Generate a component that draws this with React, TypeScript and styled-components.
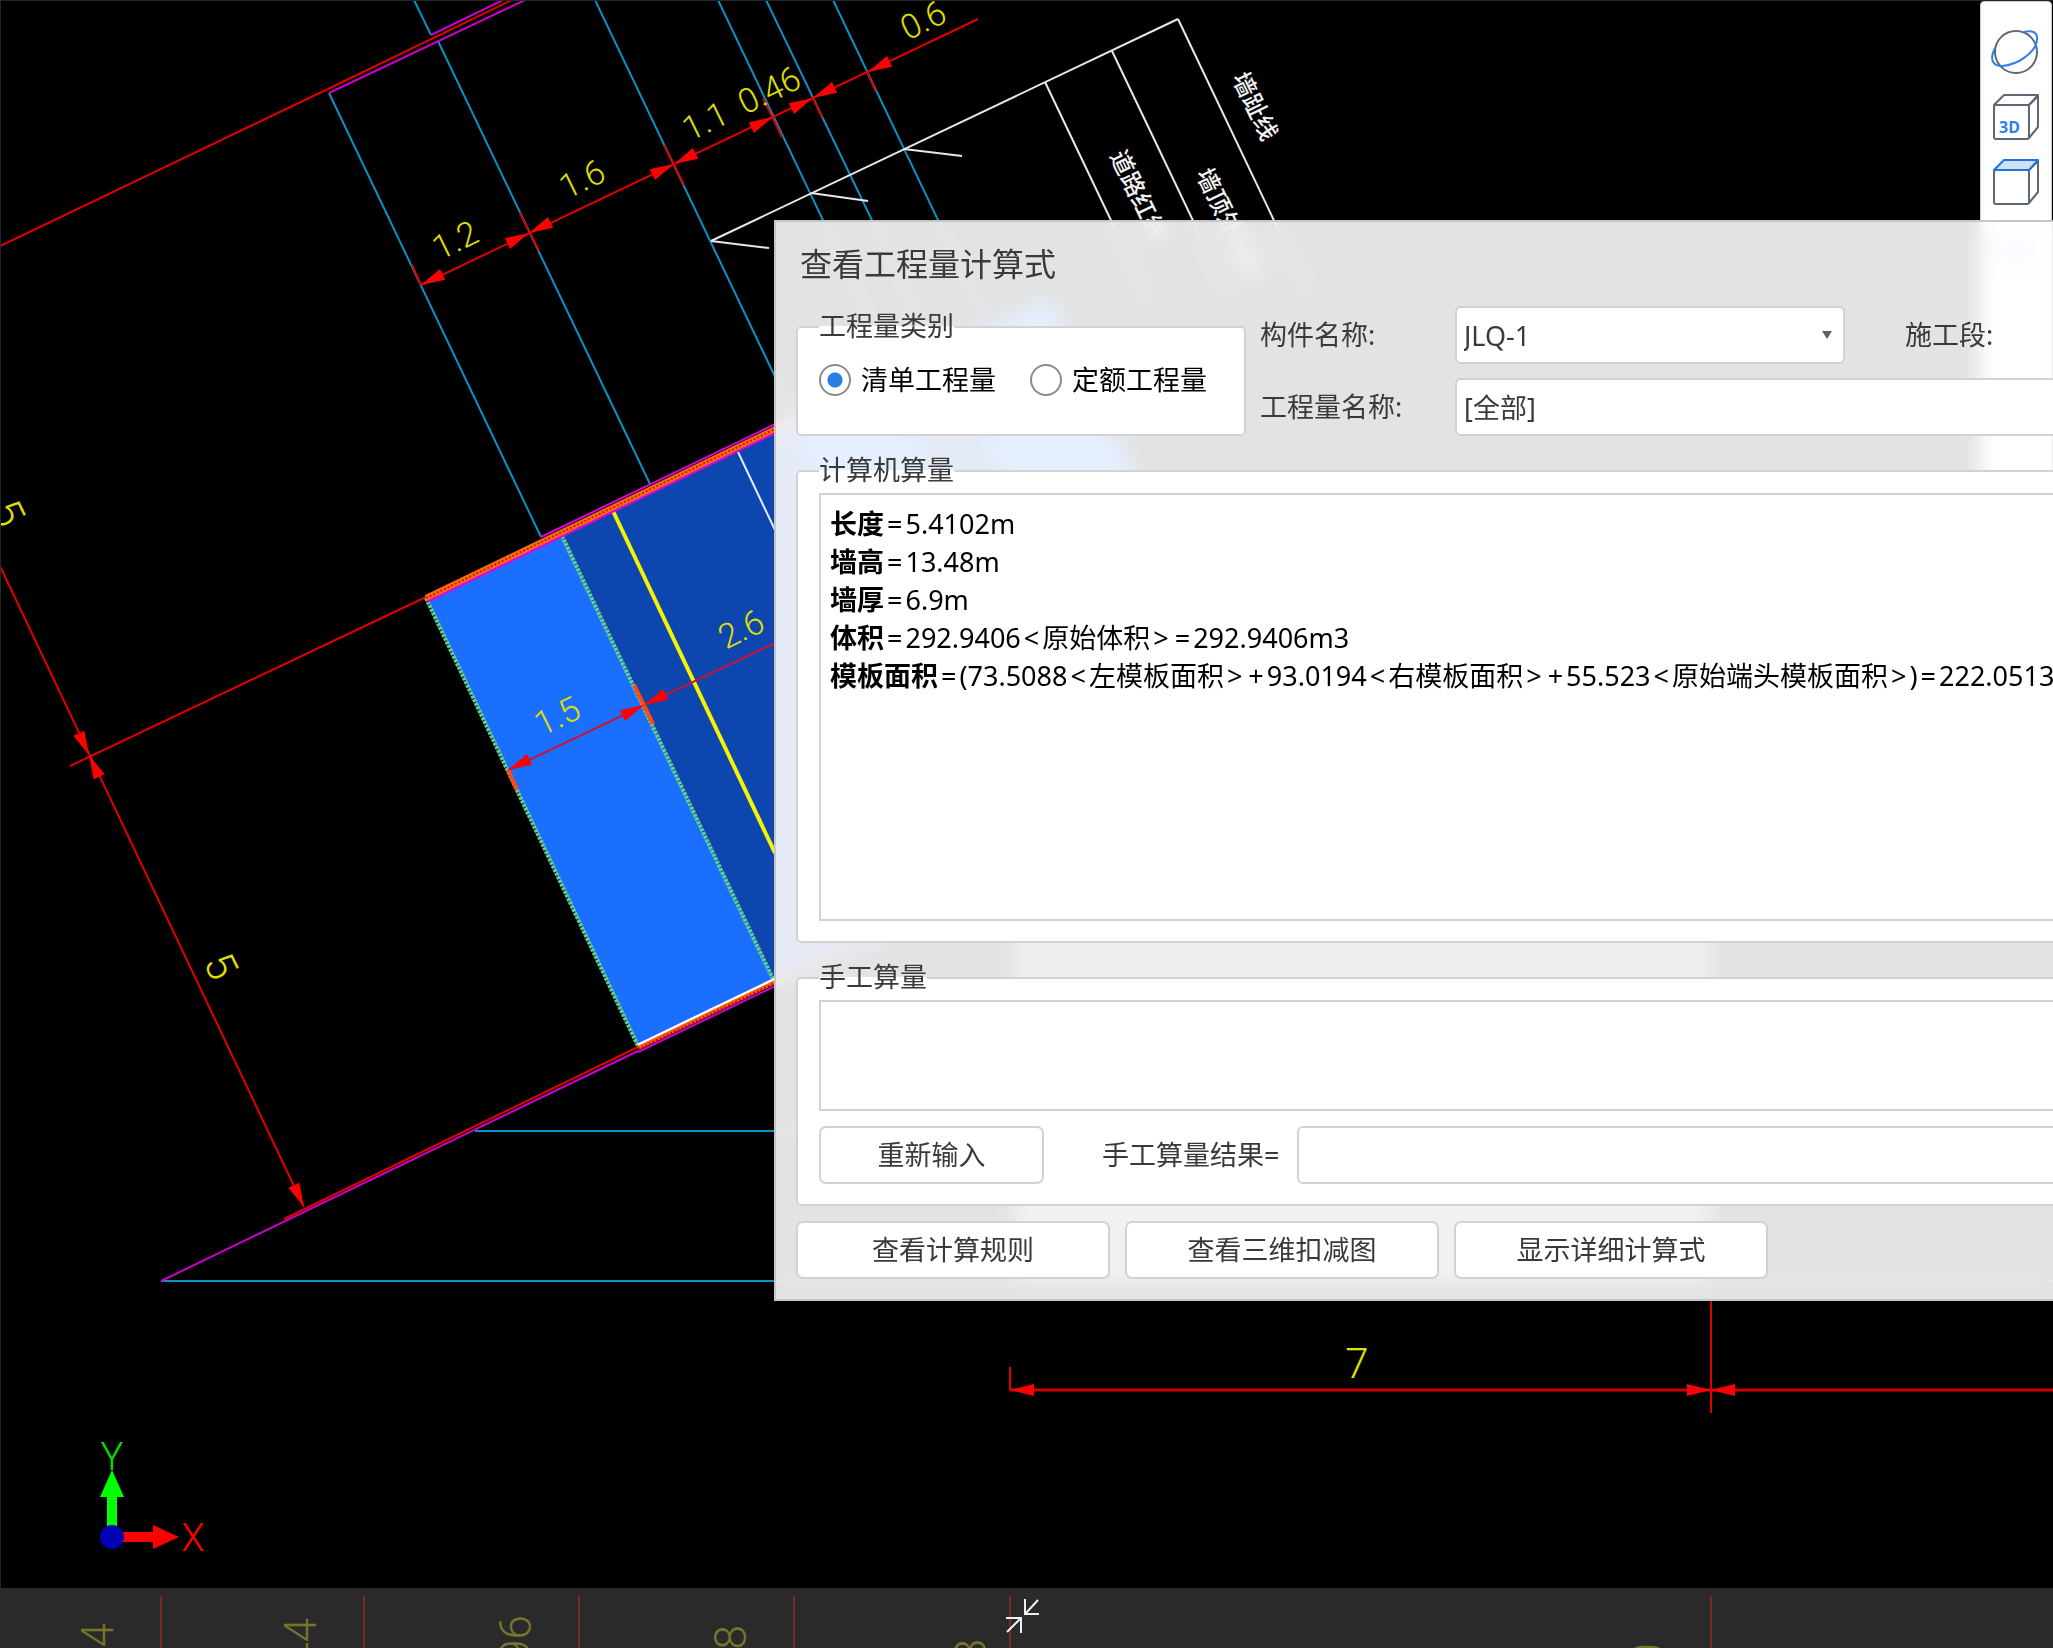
import React, { useState } from "react";
import styled, { createGlobalStyle } from "styled-components";

const GlobalStyle = createGlobalStyle`
  * { box-sizing: border-box; }
  body { margin: 0; background: #000; }
  body, button, input, select, textarea {
    font-family: "Noto Sans", "Noto Sans CJK SC", sans-serif;
  }
`;

const Workspace = styled.div`
  position: relative;
  display: flex;
  flex-direction: column;
  min-height: 100vh;
  overflow: hidden;
  background: #000;
`;

const Viewport = styled.main`
  position: relative;
  flex: 1;
  overflow: hidden;
  border-top: 1px solid #262626;
  border-left: 1px solid #262626;
`;

const Drawing = styled.svg`
  position: absolute;
  top: -1px;
  left: -1px;
  overflow: visible;
`;

const DimText = styled.text<{ $size?: number; $color?: string }>`
  font-family: Roboto, sans-serif;
  font-weight: 300;
  font-size: ${(p) => p.$size ?? 34}px;
  fill: ${(p) => p.$color ?? "#e0e000"};
  text-anchor: middle;
  dominant-baseline: central;
`;

const NoteText = styled.text`
  font-family: "Noto Sans CJK SC", sans-serif;
  font-size: 24px;
  font-weight: 500;
  fill: #f2f2f2;
  dominant-baseline: central;
`;

const Toolbar = styled.aside`
  position: absolute;
  top: 0;
  right: 1px;
  width: 72px;
  height: 700px;
  padding: 24px 0;
  display: flex;
  flex-direction: column;
  align-items: center;
  gap: 13px;
  background: #fff;
  border: 1px solid #c8c8c8;
  border-radius: 4px;
`;

const ToolButton = styled.button`
  width: 52px;
  height: 52px;
  padding: 0;
  border: 0;
  background: transparent;
  display: grid;
  place-items: center;
`;

const StatusStrip = styled.footer`
  position: relative;
  height: 60px;
  background: #2a2a2a;
  overflow: hidden;
`;

const CollapseButton = styled.button`
  position: absolute;
  left: 1000px;
  top: 6px;
  width: 44px;
  height: 44px;
  padding: 0;
  border: 0;
  background: transparent;
`;

const Dialog = styled.section`
  position: absolute;
  top: 220px;
  left: 774px;
  width: 1400px;
  padding: 20px;
  border: 2px solid #c6c6c6;
  background: rgba(255, 255, 255, 0.89);
  backdrop-filter: blur(10px);
  color: #3a3a3a;
  font-size: 27px;
  line-height: 36px;
`;

const Title = styled.h1`
  margin: 0 0 20px 4px;
  font-size: 32px;
  font-weight: 400;
  line-height: 44px;
`;

const TopRow = styled.div`
  display: flex;
  align-items: flex-end;
  gap: 14px;
  margin-bottom: 20px;
`;

const Group = styled.fieldset<{ $gap?: number }>`
  margin: 0 0 ${(p) => p.$gap ?? 20}px;
  min-width: 0;
  padding: 7px 21px 20px;
  border: 2px solid #d2d2d2;
  border-radius: 5px;
  background: #fff;
`;

const CategoryGroup = styled(Group)`
  flex: none;
  width: 450px;
  margin: 0;
  padding: 22px 21px 38px;
`;

const Legend = styled.legend`
  padding: 0 0 2px;
  line-height: 28px;
`;

const RadioRow = styled.div`
  display: flex;
  gap: 34px;
`;

const RadioLabel = styled.label`
  display: flex;
  align-items: center;
  gap: 10px;
  height: 32px;
  color: #000;
`;

const Radio = styled.input`
  appearance: none;
  flex: none;
  width: 32px;
  height: 32px;
  margin: 0;
  border: 2px solid #8c8c8c;
  border-radius: 50%;
  background: #fff;
  &:checked {
    background: radial-gradient(circle, #2a7de1 7px, #fff 8px);
  }
`;

const Filters = styled.div`
  flex: 1;
  display: grid;
  grid-template-columns: 195px 390px 60px 148px 1fr;
  row-gap: 14px;
  align-items: center;
`;

const FieldLabel = styled.label<{ $column?: number }>`
  grid-column: ${(p) => p.$column ?? "auto"};
`;

const SelectBox = styled.span<{ $span?: string }>`
  grid-column: ${(p) => p.$span ?? "auto"};
  position: relative;
  display: block;
`;

const Select = styled.select`
  appearance: none;
  display: block;
  width: 100%;
  height: 58px;
  padding: 0 40px 0 7px;
  border: 2px solid #d2d2d2;
  border-radius: 6px;
  background: #fff;
  color: #3a3a3a;
  font-size: 27px;
`;

const Caret = styled.span`
  position: absolute;
  right: 13px;
  top: 25px;
  border: 5px solid transparent;
  border-top: 8px solid #5a6270;
  border-bottom: 0;
  pointer-events: none;
`;

const Formula = styled.div`
  height: 428px;
  padding: 10px 9px;
  border: 2px solid #d2d2d2;
  overflow: hidden;
  color: #000;
`;

const FormulaLine = styled.p`
  margin: 0;
  line-height: 38px;
  white-space: nowrap;
`;

const Operator = styled.span`
  padding: 0 3px;
`;

const ManualInput = styled.textarea`
  display: block;
  width: 100%;
  height: 111px;
  padding: 8px 9px;
  border: 2px solid #d2d2d2;
  background: #fff;
  font-size: 27px;
  resize: none;
`;

const ManualRow = styled.div`
  display: flex;
  align-items: center;
  margin-top: 15px;
`;

const ResultLabel = styled.label`
  margin: 0 18px 0 58px;
  white-space: nowrap;
`;

const ResultInput = styled.input`
  flex: 1;
  min-width: 0;
  height: 58px;
  padding: 0 9px;
  border: 2px solid #d2d2d2;
  border-radius: 6px;
  font-size: 27px;
`;

const Button = styled.button<{ $width: number }>`
  flex: none;
  width: ${(p) => p.$width}px;
  height: 58px;
  padding: 0;
  border: 2px solid #d2d2d2;
  border-radius: 7px;
  background: #fff;
  color: #3a3a3a;
  font-size: 27px;
  line-height: 36px;
`;

const Actions = styled.div`
  display: flex;
  gap: 15px;
`;

type Pt = [number, number];

const Line = ({ a, b, c, w = 2, dash }: { a: Pt; b: Pt; c: string; w?: number; dash?: string }) => (
  <line x1={a[0]} y1={a[1]} x2={b[0]} y2={b[1]} stroke={c} strokeWidth={w} strokeDasharray={dash} />
);

/* Arrow head with its tip at `at`; `angle` is the direction it points in. */
const Arrow = ({ at, angle, size = 24 }: { at: Pt; angle: number; size?: number }) => (
  <path
    d={`M0 0 L${-size} -6 L${-size} 6 Z`}
    fill="#ff0000"
    transform={`translate(${at[0]} ${at[1]}) rotate(${angle})`}
  />
);

const CYAN = "#0a92c4";
const RED = "#e00000";
const MAGENTA = "#c800c8";
const WHITE = "#e8e8e8";
const SLOPE = -26;

const cyanLines: [Pt, Pt][] = [
  [[329, 93], [541, 537]],
  [[414, 0], [431, 35]],
  [[438, 41], [650, 484]],
  [[595, 0], [790, 408]],
  [[718, 0], [905, 392]],
  [[766, 0], [945, 372]],
  [[833, 0], [1000, 350]],
  [[475, 1131], [2053, 1131]],
  [[161, 1281], [2053, 1281]],
];

const redTicks: [Pt, Pt][] = [
  [[412, 265], [421, 285]],
  [[520, 213], [539, 251]],
  [[664, 145], [684, 185]],
  [[763, 98], [782, 137]],
  [[813, 98], [822, 117]],
  [[867, 72], [876, 92]],
];

const whiteLines: [Pt, Pt][] = [
  [[711, 241], [1178, 19]],
  [[711, 241], [769, 248]],
  [[811, 193], [868, 201]],
  [[904, 149], [962, 156]],
  [[1045, 82], [1150, 302]],
  [[1112, 51], [1230, 298]],
  [[1178, 19], [1310, 296]],
];

const dimensions: { t: string; x: number; y: number; r: number; s?: number }[] = [
  { t: "1.2", x: 455, y: 240, r: SLOPE },
  { t: "1.6", x: 582, y: 179, r: SLOPE },
  { t: "1.1", x: 705, y: 121, r: SLOPE },
  { t: "0.46", x: 769, y: 90, r: SLOPE },
  { t: "0.6", x: 923, y: 20, r: SLOPE },
  { t: "1.5", x: 557, y: 716, r: SLOPE },
  { t: "2.6", x: 741, y: 629, r: SLOPE },
  { t: "5", x: 8, y: 513, r: 64, s: 42 },
  { t: "5", x: 221, y: 966, r: 64, s: 42 },
  { t: "7", x: 1357, y: 1363, r: 0, s: 42 },
];

const CadDrawing = () => (
  <Drawing width="2053" height="1588" aria-label="CAD 图纸">
    <polygon points="562,536 1050,298 1290,800 773,980" fill="#0e46b0" />
    <polygon points="790,425 885,378 1060,745 965,790" fill="#1a6fff" />
    <polygon points="945,350 1050,298 1240,700 1130,740" fill="#1a6fff" />
    <polygon points="426,597 562,536 773,979 638,1046" fill="#1a6fff" />
    <rect x="1013" y="920" width="698" height="270" fill="#6e6e6e" />
    <rect x="1013" y="1190" width="698" height="90" fill="#848484" />
    {cyanLines.map(([a, b], i) => <Line key={i} a={a} b={b} c={CYAN} />)}
    {redTicks.map(([a, b], i) => <Line key={i} a={a} b={b} c={RED} />)}
    {whiteLines.map(([a, b], i) => <Line key={i} a={a} b={b} c={WHITE} />)}

    <Line a={[0, 246]} b={[328, 89]} c={RED} />
    <Line a={[328, 89]} b={[512, 0]} c={RED} />
    <Line a={[329, 93]} b={[525, 0]} c={MAGENTA} />
    <Line a={[431, 35]} b={[503, 0]} c={MAGENTA} />

    <Line a={[421, 285]} b={[978, 19]} c={RED} />
    <Arrow at={[421, 285]} angle={SLOPE + 180} />
    {([[529, 233], [674, 164], [813, 98]] as Pt[]).map((p) => (
      <g key={p[0]}>
        <Arrow at={p} angle={SLOPE} />
        <Arrow at={p} angle={SLOPE + 180} />
      </g>
    ))}
    <Arrow at={[773, 117]} angle={SLOPE} />
    <Arrow at={[868, 72]} angle={SLOPE + 180} />

    <Line a={[70, 766]} b={[426, 597]} c={RED} />
    <Line a={[0, 566]} b={[304, 1207]} c={RED} />
    <Arrow at={[89, 755]} angle={65} />
    <Arrow at={[89, 755]} angle={245} />
    <Arrow at={[304, 1207]} angle={65} />

    <Line a={[161, 1281]} b={[638, 1051]} c={MAGENTA} />
    <Line a={[284, 1219]} b={[638, 1047]} c={RED} />

    <Line a={[426, 598]} b={[638, 1046]} c="#62cf8c" w={4} dash="3 1" />
    <Line a={[562, 536]} b={[773, 979]} c="#62cf8c" w={4} dash="3 1" />
    <Line a={[613, 511]} b={[775, 853]} c="#f4f400" w={4} />
    <Line a={[738, 452]} b={[775, 530]} c="#e6ecff" />

    <Line a={[426, 598]} b={[960, 340]} c="#ff6a10" w={6} />
    <Line a={[426, 598]} b={[775, 429]} c="#c02000" w={2} dash="2 2" />
    <Line a={[541, 537]} b={[960, 335]} c="#e000e0" />
    <Line a={[427, 602]} b={[775, 433]} c="#e000e0" />

    <Line a={[638, 1045]} b={[775, 979]} c="#ffffff" w={3} />
    <Line a={[638, 1048]} b={[900, 922]} c="#ff5a10" w={4} />
    <Line a={[638, 1049]} b={[775, 983]} c="#c01000" w={2} dash="2 2" />
    <Line a={[638, 1052]} b={[900, 926]} c="#d000d0" />

    <Line a={[508, 770]} b={[775, 643]} c="#d01030" />
    <Line a={[508, 770]} b={[517, 790]} c="#ff4a10" w={4} />
    <Line a={[634, 685]} b={[653, 724]} c="#ff4a10" w={4} />
    <Arrow at={[508, 770]} angle={SLOPE + 180} />
    <Arrow at={[644, 705]} angle={SLOPE} />
    <Arrow at={[644, 705]} angle={SLOPE + 180} />

    <Line a={[1010, 1367]} b={[1010, 1390]} c={RED} />
    <Line a={[1010, 1390]} b={[2053, 1390]} c="#d00000" w={3} />
    <Line a={[1711, 920]} b={[1711, 1413]} c={RED} />
    <Arrow at={[1010, 1390]} angle={180} />
    <Arrow at={[1711, 1390]} angle={0} />
    <Arrow at={[1711, 1390]} angle={180} />

    {dimensions.map((d, i) => (
      <DimText key={i} $size={d.s} transform={`translate(${d.x} ${d.y}) rotate(${d.r})`}>{d.t}</DimText>
    ))}
    <NoteText transform="translate(1241 73) rotate(64)">墙趾线</NoteText>
    <NoteText transform="translate(1119 151) rotate(64)">道路红线</NoteText>
    <NoteText transform="translate(1205 169) rotate(64)">墙顶外边线</NoteText>

    <path d="M107 1526 V1497 H100 L112 1470 L124 1497 H117 V1526 Z" fill="#00ff00" />
    <path d="M122 1532 H153 V1525 L179 1537 L153 1549 V1542 H122 Z" fill="#ff0000" />
    <circle cx="112" cy="1537" r="12" fill="#0000b4" />
    <DimText $size={38} $color="#ff0000" transform="translate(193 1538)">X</DimText>
    <DimText $size={38} $color="#00e000" transform="translate(112 1457)">Y</DimText>
  </Drawing>
);

const rulerTicks = [161, 364, 579, 794, 1010, 1711];
const rulerLabels: { t: string; x: number; y: number }[] = [
  { t: "44", x: 98, y: 35 },
  { t: "44", x: 301, y: 30 },
  { t: "96", x: 516, y: 27 },
  { t: "8", x: 731, y: 37 },
  { t: "8", x: 971, y: 51 },
  { t: "0", x: 1648, y: 55 },
];

const RulerText = styled.text`
  font-family: Roboto, sans-serif;
  font-weight: 300;
  font-size: 44px;
  fill: #77752a;
  text-anchor: end;
  dominant-baseline: central;
`;

const Ruler = () => (
  <svg width="2053" height="60" aria-hidden="true">
    {rulerTicks.map((x) => <Line key={x} a={[x, 8]} b={[x, 60]} c="#782a2a" />)}
    {rulerLabels.map((l) => (
      <RulerText key={l.x} transform={`translate(${l.x} ${l.y}) rotate(-90)`}>{l.t}</RulerText>
    ))}
  </svg>
);

const CubeFrame = ({ top }: { top?: boolean }) => (
  <g fill="none" stroke="#5f6675" strokeWidth="2" strokeLinejoin="round">
    <rect x="4" y="14" width="35" height="34" rx="2" />
    <path d="M39 14 L48 5 V36 L39 47" />
    <path d="M4 14 L14 4 H48 L39 14 Z" stroke={top ? "#1f74e0" : "#5f6675"} fill={top ? "#cfe0f7" : "none"} />
  </g>
);

const Tools = () => (
  <Toolbar>
    <ToolButton aria-label="动态观察">
      <svg width="52" height="52" fill="none" strokeWidth="2">
        <circle cx="26" cy="26" r="21" stroke="#5f6675" />
        <path d="M5 22 C-1 34 3 40 12 40 C28 39 46 26 47 14 C48 6 42 4 34 6" stroke="#2f80ed" />
      </svg>
    </ToolButton>
    <ToolButton aria-label="三维视图">
      <svg width="52" height="52">
        <CubeFrame />
        <text x="9" y="42" fontFamily="Noto Sans, sans-serif" fontSize="16" fontWeight="700" fill="#2f80ed">3D</text>
      </svg>
    </ToolButton>
    <ToolButton aria-label="俯视图">
      <svg width="52" height="52"><CubeFrame top /></svg>
    </ToolButton>
    <ToolButton aria-label="区域选择">
      <svg width="52" height="52"><rect x="8" y="10" width="36" height="38" fill="#c4dcf8" /></svg>
    </ToolButton>
  </Toolbar>
);

const results: { name: string; expr: string }[] = [
  { name: "长度", expr: "=5.4102m" },
  { name: "墙高", expr: "=13.48m" },
  { name: "墙厚", expr: "=6.9m" },
  { name: "体积", expr: "=292.9406<原始体积>=292.9406m3" },
  { name: "模板面积", expr: "=(73.5088<左模板面积>+93.0194<右模板面积>+55.523<原始端头模板面积>)=222.0513m2" },
];

/* Sets the signs of a formula apart from its numbers and names. */
const Expression = ({ text }: { text: string }) => (
  <>
    {text.split(/([=<>+])/).filter(Boolean).map((part, i) =>
      /^[=<>+]$/.test(part) ? <Operator key={i}>{part}</Operator> : part,
    )}
  </>
);

export default function App() {
  const [category, setCategory] = useState("bill");
  const [manual, setManual] = useState("");
  const [manualResult, setManualResult] = useState("");

  return (
    <>
      <GlobalStyle />
      <Workspace>
        <Viewport>
          <CadDrawing />
          <Tools />
        </Viewport>
        <StatusStrip>
          <Ruler />
          <CollapseButton aria-label="收起">
            <svg width="44" height="44" fill="none" stroke="#f0f0f0" strokeWidth="2">
              <path d="M25 5 V20 H39 M38 6 L26 19" />
              <path d="M6 24 H21 V39 M7 38 L20 25" />
            </svg>
          </CollapseButton>
        </StatusStrip>

        <Dialog role="dialog" aria-labelledby="dlg-title">
          <Title id="dlg-title">查看工程量计算式</Title>
          <TopRow>
            <CategoryGroup>
              <Legend>工程量类别</Legend>
              <RadioRow>
                <RadioLabel>
                  <Radio type="radio" name="category" checked={category === "bill"} onChange={() => setCategory("bill")} />
                  清单工程量
                </RadioLabel>
                <RadioLabel>
                  <Radio type="radio" name="category" checked={category === "quota"} onChange={() => setCategory("quota")} />
                  定额工程量
                </RadioLabel>
              </RadioRow>
            </CategoryGroup>
            <Filters>
              <FieldLabel htmlFor="component">构件名称:</FieldLabel>
              <SelectBox>
                <Select id="component"><option>JLQ-1</option></Select>
                <Caret />
              </SelectBox>
              <FieldLabel htmlFor="stage" $column={4}>施工段:</FieldLabel>
              <SelectBox>
                <Select id="stage"><option></option></Select>
              </SelectBox>
              <FieldLabel htmlFor="quantity">工程量名称:</FieldLabel>
              <SelectBox $span="2 / -1">
                <Select id="quantity"><option>[全部]</option></Select>
                <Caret />
              </SelectBox>
            </Filters>
          </TopRow>

          <Group>
            <Legend>计算机算量</Legend>
            <Formula>
              {results.map((r) => (
                <FormulaLine key={r.name}><b>{r.name}</b><Expression text={r.expr} /></FormulaLine>
              ))}
            </Formula>
          </Group>

          <Group $gap={15}>
            <Legend>手工算量</Legend>
            <ManualInput aria-label="手工算量" value={manual} onChange={(e) => setManual(e.target.value)} />
            <ManualRow>
              <Button $width={225} onClick={() => setManual("")}>重新输入</Button>
              <ResultLabel htmlFor="manual-result">手工算量结果=</ResultLabel>
              <ResultInput id="manual-result" value={manualResult} onChange={(e) => setManualResult(e.target.value)} />
            </ManualRow>
          </Group>

          <Actions>
            <Button $width={314}>查看计算规则</Button>
            <Button $width={314}>查看三维扣减图</Button>
            <Button $width={314}>显示详细计算式</Button>
          </Actions>
        </Dialog>
      </Workspace>
    </>
  );
}
